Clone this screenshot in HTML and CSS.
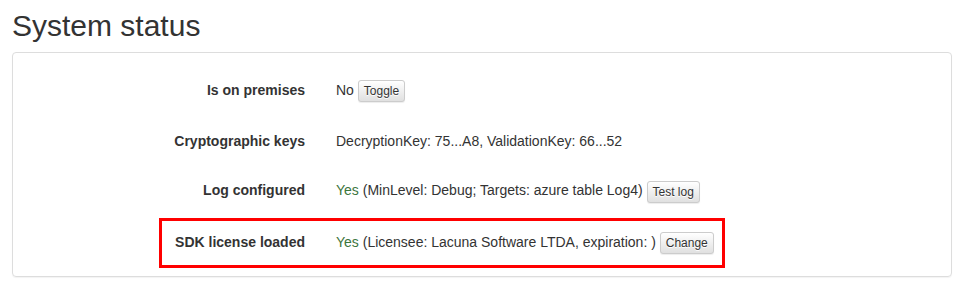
FILE: index.html
```html
<!DOCTYPE html>
<html lang="en">
  <head>
    <meta charset="UTF-8" />
    <meta name="viewport" content="width=device-width, initial-scale=1.0" />
    <title>System status</title>
    <link rel="stylesheet" href="styles.css">
  </head>
  <body>
    <div class="page">
      <h1 class="title">System status</h1>
      <div class="panel">
        <div class="panel-body">
          <div class="form-group">
            <div class="control-label">Is on premises</div>
            <div class="form-value">No <button class="btn">Toggle</button></div>
          </div>
          <div class="form-group">
            <div class="control-label">Cryptographic keys</div>
            <div class="form-value">DecryptionKey: 75...A8, ValidationKey: 66...52</div>
          </div>
          <div class="form-group">
            <div class="control-label">Log configured</div>
            <div class="form-value"><span class="text-success">Yes</span> (MinLevel: Debug; Targets: azure table Log4) <button class="btn">Test log</button></div>
          </div>
          <div class="form-group">
            <div class="control-label">SDK license loaded</div>
            <div class="form-value"><span class="text-success">Yes</span> (Licensee: Lacuna Software LTDA, expiration: ) <button class="btn">Change</button></div>
          </div>
        </div>
        <div class="highlight"></div>
      </div>
    </div>
  </body>
</html>
```

FILE: styles.css
```css
* {
  box-sizing: border-box;
}

body {
  margin: 0;
  font-family: "Liberation Sans", Arial, Helvetica, sans-serif;
  font-size: 14px;
  line-height: 1.42857143;
  color: #333;
  background-color: #fff;
}

.page {
  padding: 9px 12px;
}

.title {
  margin: 0 0 10px;
  font-size: 30px;
  font-weight: normal;
  line-height: 1.1;
}

.panel {
  position: relative;
  border: 1px solid #ddd;
  border-radius: 4px;
  box-shadow: 0 1px 1px rgba(0, 0, 0, 0.05);
}

.panel-body {
  padding: 20px 15px 0;
}

.form-group {
  display: flex;
  margin-bottom: 15px;
}

.control-label {
  flex: 0 0 277px;
  padding-top: 7px;
  text-align: right;
  font-weight: bold;
}

.form-value {
  margin-left: 31px;
  padding: 7px 0;
  min-height: 34px;
}

.text-success {
  color: #3c763d;
}

.btn {
  display: inline-block;
  margin: 0;
  padding: 1px 5px;
  font-family: inherit;
  font-size: 12px;
  line-height: 1.5;
  color: #333;
  text-shadow: 0 1px 0 #fff;
  background-image: linear-gradient(to bottom, #fff 0, #e0e0e0 100%);
  border: 1px solid #ccc;
  border-radius: 3px;
  box-shadow: inset 0 1px 0 rgba(255, 255, 255, 0.15), 0 1px 1px rgba(0, 0, 0, 0.075);
  cursor: pointer;
  vertical-align: middle;
}

.highlight {
  position: absolute;
  left: 146px;
  top: 165px;
  width: 566px;
  height: 50px;
  border: 3px solid #f00;
  pointer-events: none;
}
```
